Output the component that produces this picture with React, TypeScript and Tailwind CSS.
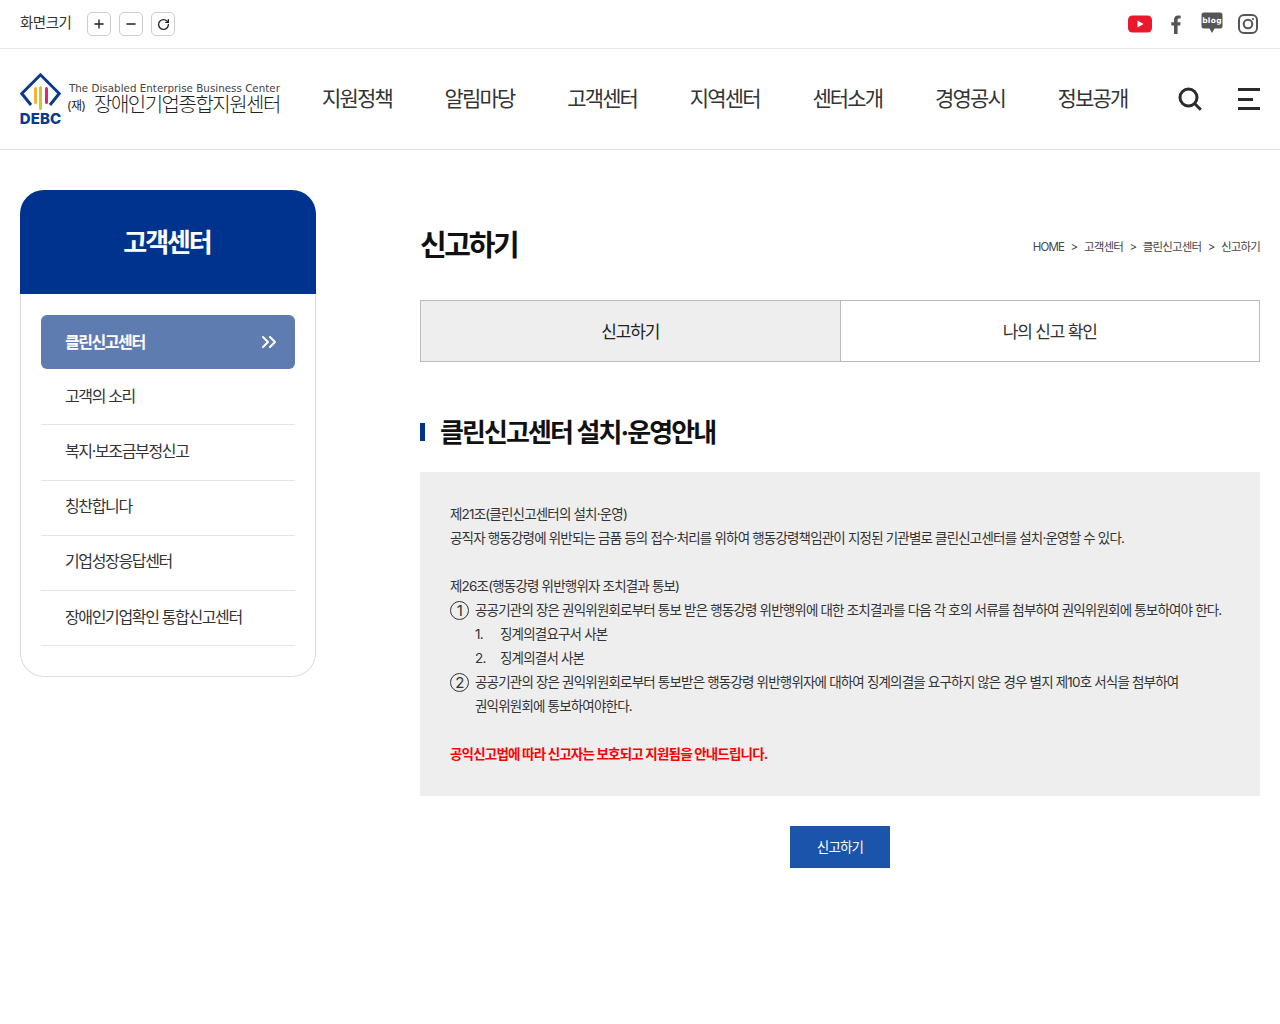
import { Plus, Minus, RotateCw, ChevronsRight } from "lucide-react";

const font = "font-['Inter','Noto_Sans_CJK_KR',sans-serif]";

const navItems = ["지원정책", "알림마당", "고객센터", "지역센터", "센터소개", "경영공시", "정보공개"];
const sideItems = ["고객의 소리", "복지·보조금부정신고", "칭찬합니다", "기업성장응답센터", "장애인기업확인 통합신고센터"];

function Logo() {
  return (
    <div className="flex w-[302px] shrink-0 items-center">
      <div className="-ml-[1px] flex w-[43px] shrink-0 flex-col items-center">
        <svg width="43" height="40" viewBox="0 0 43 40" fill="none">
          <path d="M12 33 2.800 21.500 21.500 2.800 40.200 21.500 31 33" stroke="#0b3a8c" strokeWidth="3" />
          <rect x="15" y="15" width="3" height="17" rx="1.500" fill="#f4b23c" />
          <rect x="20" y="14" width="3" height="24" rx="1.500" fill="#c9c83a" />
          <rect x="26" y="15" width="3" height="17" rx="1.500" fill="#d42a7c" />
        </svg>
        <span className="-mt-[1px] text-[15px] leading-[15px] font-extrabold tracking-[0.01em] text-[#0b3a8c] font-['Inter',sans-serif]">DEBC</span>
      </div>
      <div className="ml-[5px] flex flex-col self-start pt-[10px]">
        <span className="ml-[2px] text-[10.350px] leading-[13px] whitespace-nowrap text-[#444] font-['DejaVu_Sans',sans-serif]">The Disabled Enterprise Business Center</span>
        <span className="-mt-[1px] flex items-center whitespace-nowrap text-[#222]">
          <span className="w-[27px] text-[12px] tracking-[-0.04em]">(재)</span>
          <span className="text-[20px] leading-[23px] font-light tracking-[-0.075em]">장애인기업종합지원센터</span>
        </span>
      </div>
    </div>
  );
}

function SocialIcons() {
  return (
    <div className="flex items-center">
      <svg width="24" height="18" viewBox="0 0 24 18">
        <rect width="24" height="17" y="0.500" rx="4.500" fill="#e8192c" />
        <path d="M9.500 5.500v7l6-3.500z" fill="#fff" />
      </svg>
      <svg width="11" height="19" viewBox="0 0 11 19" className="ml-[19px]">
        <path d="M3 19V10.400H.3V7.200H3V4.800C3 2 4.600.5 7.200.5c1.100 0 2 .1 2.500.2v2.900H8.100c-1.200 0-1.500.6-1.500 1.500v2.100h3l-.4 3.200H6.600V19z" fill="#555" />
      </svg>
      <svg width="22" height="22" viewBox="0 0 22 22" className="ml-[19px] -mt-[2px]">
        <path d="M3 .5h16A2.500 2.500 0 0 1 21.500 3v11a2.500 2.500 0 0 1-2.500 2.500h-5.500L11 21l-2.500-4.500H3A2.500 2.500 0 0 1 .5 14V3A2.500 2.500 0 0 1 3 .5z" fill="#555" />
        <text x="11" y="11.300" textAnchor="middle" fontSize="7.500" fontWeight="800" letterSpacing="0.3" fill="#fff" fontFamily="DejaVu Sans">blog</text>
      </svg>
      <svg width="20" height="20" viewBox="0 0 20 20" fill="none" stroke="#555" className="ml-[15px]">
        <rect x="1" y="1" width="18" height="18" rx="5" strokeWidth="2" />
        <circle cx="10" cy="10" r="4.300" strokeWidth="2" />
        <circle cx="15" cy="5" r="1.100" fill="#555" stroke="none" />
      </svg>
    </div>
  );
}

function ZoomButton({ children }: { children: React.ReactNode }) {
  return (
    <button className="flex h-[24px] w-[24px] items-center justify-center rounded-[5px] border border-[#ccc] bg-white text-[#222]">
      {children}
    </button>
  );
}

export default function App() {
  return (
    <div className={`${font} min-h-[1024px] bg-white text-[#222]`}>
      <div className="flex h-[49px] items-center justify-between border-b border-[#eaeaea] pl-[20px] pr-[22px]">
        <div className="flex items-center">
          <span className="mr-[16px] -mt-[3px] text-[14.500px] tracking-[-0.035em] text-[#333]">화면크기</span>
          <div className="flex gap-[8px]">
            <ZoomButton><Plus size={14} strokeWidth={2.400} /></ZoomButton>
            <ZoomButton><Minus size={14} strokeWidth={2.400} /></ZoomButton>
            <ZoomButton><RotateCw size={13} strokeWidth={2.400} /></ZoomButton>
          </div>
        </div>
        <SocialIcons />
      </div>

      <header className="flex h-[101px] items-center border-b border-[#ddd] px-[20px]">
        <Logo />
        <nav className="flex gap-[52.600px]">
          {navItems.map((item) => (
            <a key={item} className="w-[70px] text-[21px] leading-[30px] tracking-[-0.088em] whitespace-nowrap text-[#333]">{item}</a>
          ))}
        </nav>
        <div className="ml-auto flex items-center gap-[36px]">
          <svg width="24" height="24" viewBox="0 0 24 24" fill="none" stroke="#2b2b2b" strokeWidth="3">
            <circle cx="10.500" cy="10.500" r="8.500" />
            <path d="m16.800 16.800 6 6" />
          </svg>
          <div className="flex w-[22px] flex-col items-start gap-[6.500px]">
            <span className="h-[3px] w-[22px] bg-[#2b2b2b]" />
            <span className="h-[3px] w-[15px] bg-[#2b2b2b]" />
            <span className="h-[3px] w-[22px] bg-[#2b2b2b]" />
          </div>
        </div>
      </header>

      <div className="flex items-start px-[20px] pt-[40px]">
        <aside className="w-[296px] shrink-0">
          <div className="flex h-[104px] items-center justify-center rounded-t-[24px] bg-[#00338d]">
            <h2 className="pr-[2px] text-[26px] font-bold tracking-[-0.08em] text-white">고객센터</h2>
          </div>
          <div className="rounded-b-[24px] border border-t-0 border-[#ddd] px-[20px] pt-[21px] pb-[30px]">
            <div className="mb-[1px] flex h-[54px] items-center justify-between rounded-[6px] bg-[#5f7cb1] pl-[24px] pr-[14px] text-[16px] font-bold tracking-[-0.09em] text-white">
              <span>클린신고센터</span>
              <ChevronsRight size={24} strokeWidth={2} />
            </div>
            {sideItems.map((item) => (
              <div key={item} className="flex h-[55.250px] items-center border-b border-[#e4e4e4] pb-[3px] pl-[24px] text-[16px] tracking-[-0.085em] text-[#333]">
                {item}
              </div>
            ))}
          </div>
        </aside>

        <main className="ml-[104px] flex-1">
          <div className="flex h-[110px] items-start justify-between pt-[35px]">
            <h1 className="text-[29px] leading-[42px] font-bold tracking-[-0.08em] text-[#111]">신고하기</h1>
            <div className="mt-[13px] flex gap-[6.500px] text-[11.500px] leading-[18px] tracking-[-0.072em] text-[#444]">
              <span>HOME</span><span>&gt;</span><span>고객센터</span><span>&gt;</span><span>클린신고센터</span><span>&gt;</span><span>신고하기</span>
            </div>
          </div>

          <div className="flex h-[62px] border border-[#bbb] text-[17px] tracking-[-0.07em]">
            <div className="flex flex-1 items-center justify-center border-r border-[#bbb] bg-[#eee] pt-[3px] text-[#222]">신고하기</div>
            <div className="flex flex-1 items-center justify-center pt-[3px] text-[#333]">나의 신고 확인</div>
          </div>

          <h3 className="relative mt-[51px] flex h-[38px] items-center pl-[20px] text-[26px] font-bold tracking-[-0.073em] text-[#111]">
            <span className="absolute left-0 top-[10px] h-[18px] w-[5px] bg-[#00338d]" />
            클린신고센터 설치·운영안내
          </h3>

          <div className="mt-[21px] bg-[#eee] p-[30px] text-[13.500px] leading-[24px] tracking-[-0.061em] text-[#333]">
            <p>제21조(클린신고센터의 설치·운영)</p>
            <p>공직자 행동강령에 위반되는 금품 등의 접수·처리를 위하여 행동강령책임관이 지정된 기관별로 클린신고센터를 설치·운영할 수 있다.</p>
            <p className="mt-[24px]">제26조(행동강령 위반행위자 조치결과 통보)</p>
            <div className="flex">
              <span className="flex h-[24px] w-[25px] shrink-0 items-center"><span className="flex h-[19px] w-[19px] items-center justify-center rounded-full border border-[#333] text-[15px] leading-none">1</span></span>
              <p>공공기관의 장은 권익위원회로부터 통보 받은 행동강령 위반행위에 대한 조치결과를 다음 각 호의 서류를 첨부하여 권익위원회에 통보하여야 한다.</p>
            </div>
            <div className="flex pl-[25px]"><span className="w-[25px]">1.</span><span>징계의결요구서 사본</span></div>
            <div className="flex pl-[25px]"><span className="w-[25px]">2.</span><span>징계의결서 사본</span></div>
            <div className="flex">
              <span className="flex h-[24px] w-[25px] shrink-0 items-center"><span className="flex h-[19px] w-[19px] items-center justify-center rounded-full border border-[#333] text-[15px] leading-none">2</span></span>
              <p>공공기관의 장은 권익위원회로부터 통보받은 행동강령 위반행위자에 대하여 징계의결을 요구하지 않은 경우 별지 제10호 서식을 첨부하여<br />권익위원회에 통보하여야한다.</p>
            </div>
            <p className="mt-[24px] font-bold tracking-[-0.06em] text-[#f00]">공익신고법에 따라 신고자는 보호되고 지원됨을 안내드립니다.</p>
          </div>

          <div className="mt-[30px] flex justify-center">
            <button className="h-[42px] w-[100px] bg-[#1b55ab] text-[13.500px] tracking-[-0.06em] text-white">신고하기</button>
          </div>
        </main>
      </div>
    </div>
  );
}
